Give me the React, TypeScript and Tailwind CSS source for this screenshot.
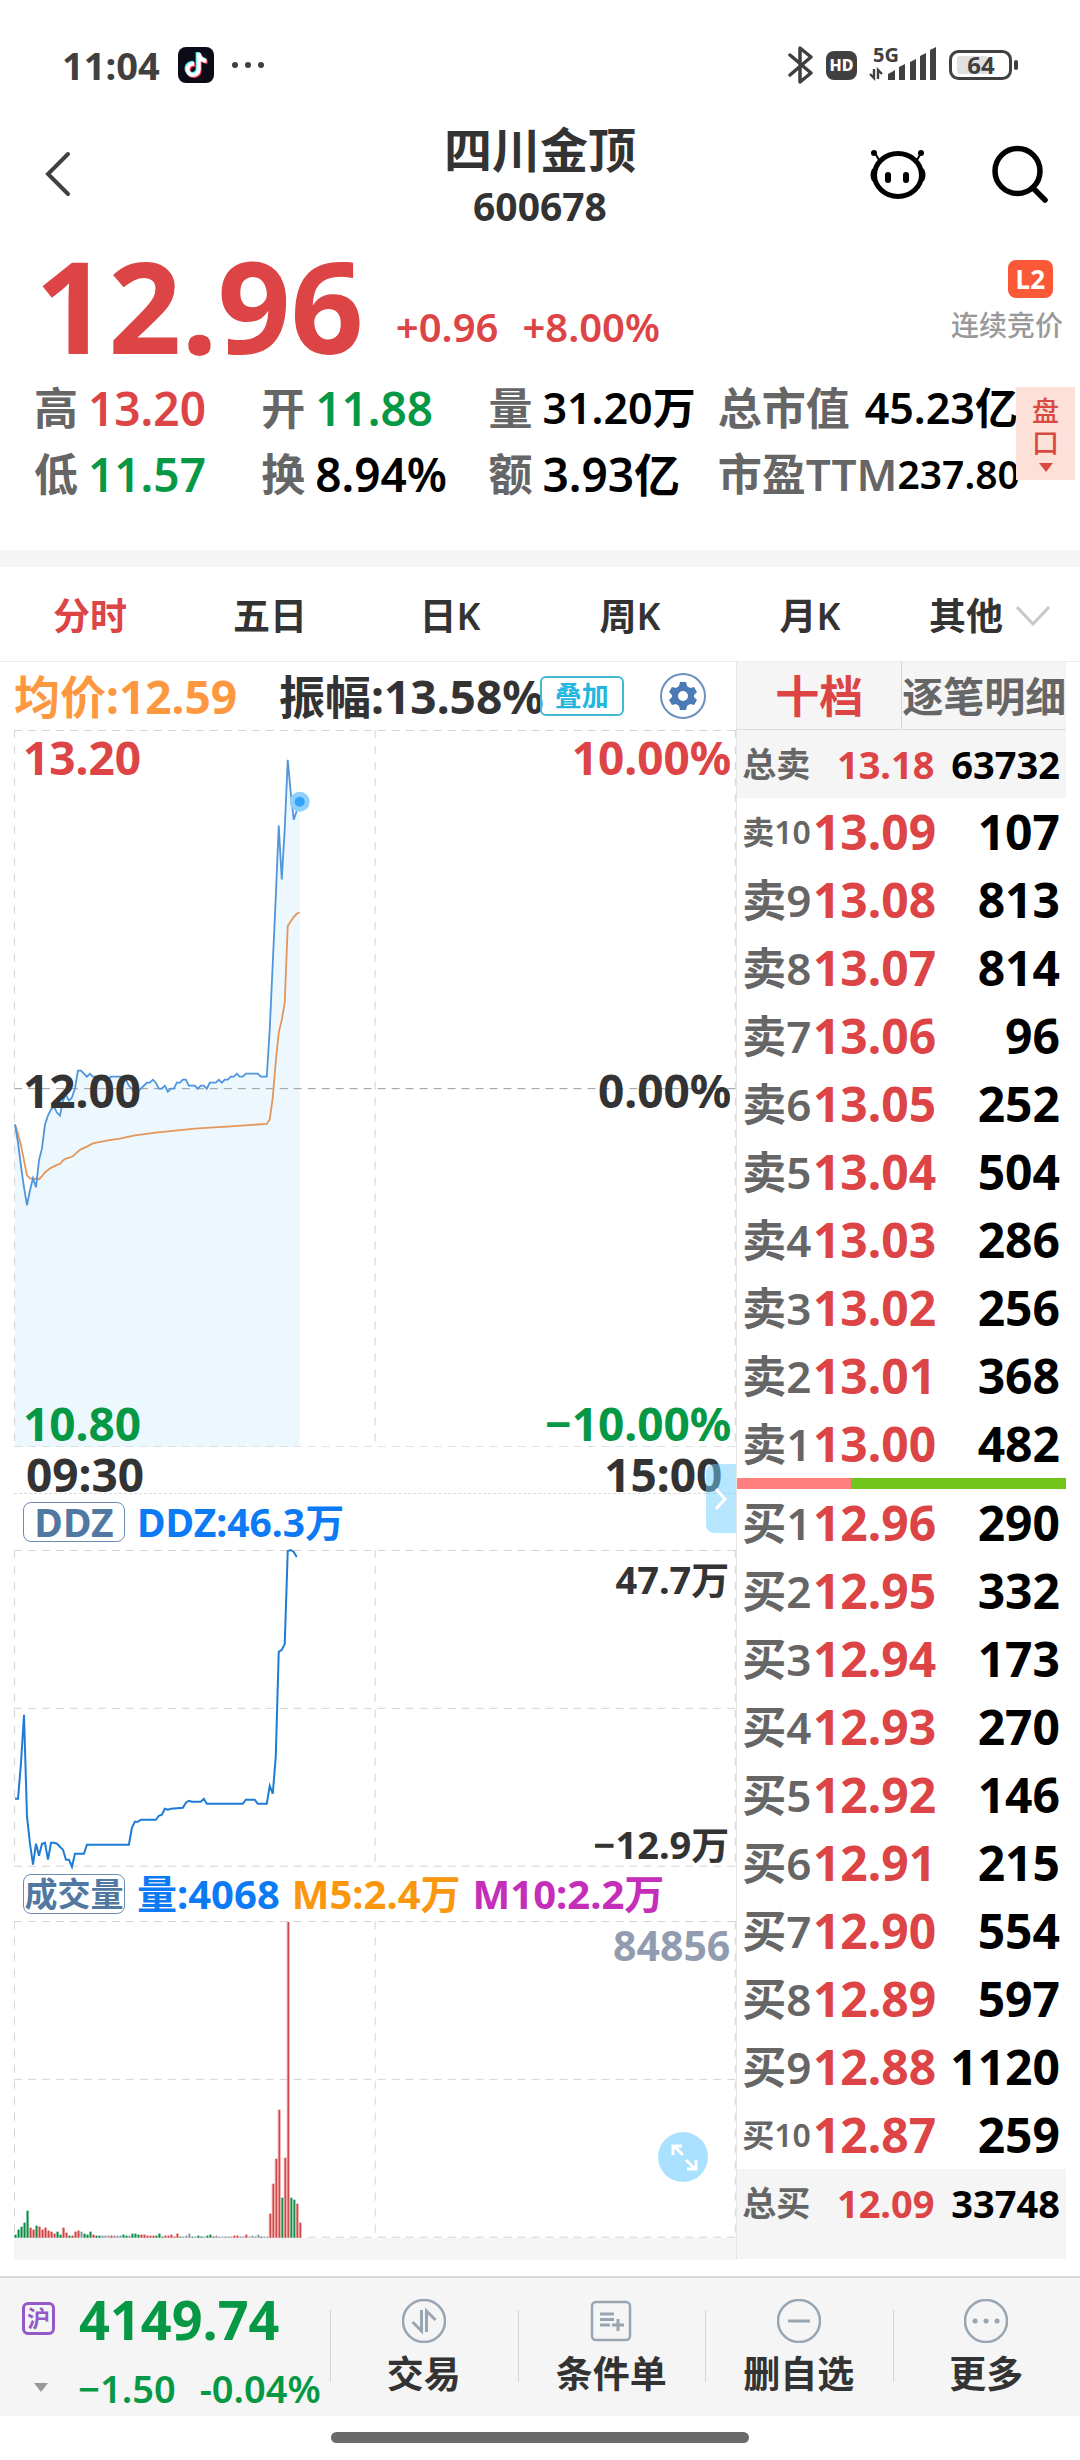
import React, { useState } from 'react';
import { FaTiktok } from 'react-icons/fa';
import clsx from 'clsx';

type Tone = 'up' | 'down' | 'flat';

interface Stat {
  label: string;
  value: string;
  tone: Tone;
  small?: boolean;
}

interface Order {
  label: string;
  price: string;
  volume: string;
}

const toneClass: Record<Tone, string> = {
  up: 'text-[#dc4446]',
  down: 'text-[#069845]',
  flat: 'text-black',
};

const stats: Stat[] = [
  { label: '高', value: '13.20', tone: 'up' },
  { label: '开', value: '11.88', tone: 'down' },
  { label: '量', value: '31.20万', tone: 'flat', small: true },
  { label: '总市值', value: '45.23亿', tone: 'flat', small: true },
  { label: '低', value: '11.57', tone: 'down' },
  { label: '换', value: '8.94%', tone: 'flat' },
  { label: '额', value: '3.93亿', tone: 'flat' },
];

const periods = ['分时', '五日', '日K', '周K', '月K'];

const asks: Order[] = [
  { label: '卖10', price: '13.09', volume: '107' },
  { label: '卖9', price: '13.08', volume: '813' },
  { label: '卖8', price: '13.07', volume: '814' },
  { label: '卖7', price: '13.06', volume: '96' },
  { label: '卖6', price: '13.05', volume: '252' },
  { label: '卖5', price: '13.04', volume: '504' },
  { label: '卖4', price: '13.03', volume: '286' },
  { label: '卖3', price: '13.02', volume: '256' },
  { label: '卖2', price: '13.01', volume: '368' },
  { label: '卖1', price: '13.00', volume: '482' },
];

const bids: Order[] = [
  { label: '买1', price: '12.96', volume: '290' },
  { label: '买2', price: '12.95', volume: '332' },
  { label: '买3', price: '12.94', volume: '173' },
  { label: '买4', price: '12.93', volume: '270' },
  { label: '买5', price: '12.92', volume: '146' },
  { label: '买6', price: '12.91', volume: '215' },
  { label: '买7', price: '12.90', volume: '554' },
  { label: '买8', price: '12.89', volume: '597' },
  { label: '买9', price: '12.88', volume: '1120' },
  { label: '买10', price: '12.87', volume: '259' },
];

// Minute prices since 09:30, in cents away from the 12.00 previous close
const priceCents = [
  -12, -18, -26, -33, -39, -34, -30, -33, -24, -20, -12, -9, -7, -6, -8, -9, -4, -2, -4, -3,
  0, 6, 6, 5, 4, 5, 4, 4, 4, 3, 3, 3, 4, 4, 4, 4, 4, 3, 1, 0,
  -2, -1, 0, 1, 2, 2, 3, 2, 0, 0, 1, -1, 0, 0, 2, 2, 3, 3, 1, 1,
  1, 0, 1, 1, 0, 2, 2, 2, 3, 2, 3, 3, 4, 4, 5, 4, 4, 5, 5, 5,
  5, 5, 4, 4, 4, 20, 42, 64, 88, 70, 87, 110, 99, 90, 93, 96,
];

// [minute, cents]
const averageCents: number[][] = [
  [0, -12], [1, -15], [2, -19], [3, -24], [4, -29], [5, -30], [8, -30.3], [9, -29.3], [10, -28],
  [11, -27.2], [12, -26.5], [13, -26], [14, -25.5], [15, -25.2], [16, -24], [17, -23.4], [19, -22.8],
  [20, -22], [21, -21], [22, -20.3], [23, -19.8], [24, -19.4], [26, -18.3], [31, -17.3], [35, -16.7],
  [40, -15.6], [47, -14.7], [60, -13.4], [72, -12.6], [84, -11.8], [85, -10.2], [86, -3], [87, 9],
  [88, 18.7], [89, 23], [90, 28.8], [91, 54.4], [92, 56], [93, 57.4], [94, 58.5], [95, 59],
];

// [minute, distance from the top of the 317 high plot]
const ddzPoints: number[][] = [
  [0, 249], [1, 249], [2, 213], [3, 165], [4, 267], [5, 294], [6, 315], [7, 294], [8, 306], [9, 294],
  [10, 293], [11, 310], [12, 293], [13, 293], [14, 294], [15, 297], [16, 300], [17, 310], [18, 310],
  [19, 317], [20, 304], [23, 304], [24, 295], [38, 295], [39, 278], [40, 272], [41, 272], [42, 270],
  [47, 270], [48, 266], [49, 265], [50, 259], [51, 260], [52, 259], [56, 258], [57, 253], [58, 251],
  [59, 252], [62, 252], [63, 249], [64, 254], [76, 254], [77, 250], [80, 250], [81, 254], [84, 254],
  [85, 236], [86, 244], [87, 207], [88, 102], [89, 100], [90, 94], [91, 1], [92, 0], [93, 2], [94, 7],
];

const volumes = [
  3, 8, 11, 15, 27, 10, 8, 12, 11, 8, 10, 7, 6, 4, 6, 3, 10, 5, 2, 2,
  6, 7, 6, 4, 3, 6, 3, 2, 2, 2, 2, 2, 2, 2, 2, 2, 3, 2, 2, 4,
  4, 3, 3, 3, 2, 2, 2, 2, 4, 1, 2, 2, 3, 1, 4, 1, 1, 2, 4, 1,
  1, 2, 1, 1, 2, 3, 1, 2, 1, 1, 1, 1, 1, 2, 2, 1, 1, 3, 1, 2,
  1, 3, 1, 1, 1, 24, 54, 79, 128, 40, 80, 316, 40, 38, 34, 15,
];

const barSides =
  'gggggrrgrrrrrrggrrgr' +
  'rrngggrggnnnrnnnggng' +
  'ggrrrrrgggrrrrrgnnng' +
  'nggnggrnnnnnnrrnnrnn' +
  'nngnnrrrrgrrggrr';

const barColors: Record<string, { line: string; body: string }> = {
  r: { line: '#c9474a', body: '#f19c9b' },
  g: { line: '#16894a', body: '#7cc9a0' },
  n: { line: '#8896a0', body: '#c4cbd0' },
};

const PLOT_WIDTH = 723;
const PRICE_HEIGHT = 718;
const STUDY_HEIGHT = 317;

const minuteX = (minute: number) => 1 + minute * 3;
const centsY = (cents: number) => PRICE_HEIGHT / 2 - (cents * PRICE_HEIGHT) / 240;

const toPoints = (points: number[][]) => points.map(([x, y]) => `${x},${y}`).join(' ');

const Grid: React.FC<{ height: number; midColor?: string }> = ({ height, midColor = '#d4d4d4' }) => (
  <g fill="none" stroke="#d4d4d4" strokeWidth="1">
    <path d={`M0 .5H${PLOT_WIDTH}M0 ${height - 0.5}H${PLOT_WIDTH}`} strokeDasharray="8 6" />
    <path d={`M0 ${height / 2}H${PLOT_WIDTH}`} stroke={midColor} strokeDasharray="8 6" />
    <path d={`M.5 0V${height}M361.5 0V${height}M722 0V${height}`} strokeDasharray="8 8" />
  </g>
);

const PriceChart: React.FC = () => {
  const price = priceCents.map((cents, i) => [minuteX(i), centsY(cents)]);
  const average = averageCents.map(([m, cents]) => [minuteX(m), centsY(cents)]);
  const [lastX, lastY] = price[price.length - 1];

  return (
    <svg viewBox="0 0 723 718" className="block w-full" aria-label="分时走势">
      <polygon points={`${toPoints(price)} ${lastX},718 1,718`} fill="#ecf8fe" />
      <Grid height={PRICE_HEIGHT} midColor="#999999" />
      <polyline points={toPoints(average)} fill="none" stroke="#e2965a" strokeWidth="1.8" />
      <polyline points={toPoints(price)} fill="none" stroke="#4f95dc" strokeWidth="1.8" />
      <circle cx={lastX} cy={lastY} r="10" fill="#8fd0fb" />
      <circle cx={lastX} cy={lastY} r="5" fill="#36a3fb" />
    </svg>
  );
};

const DdzChart: React.FC = () => (
  <svg viewBox="0 0 723 317" className="block w-full overflow-visible" aria-label="DDZ">
    <Grid height={STUDY_HEIGHT} />
    <polyline
      points={toPoints(ddzPoints.map(([m, y]) => [minuteX(m), y]))}
      fill="none"
      stroke="#1f7cd6"
      strokeWidth="2"
    />
  </svg>
);

const VolumeChart: React.FC = () => (
  <svg viewBox="0 0 723 317" className="block w-full" aria-label="成交量">
    <Grid height={STUDY_HEIGHT} />
    {volumes.map((volume, i) => {
      const color = barColors[barSides[i] ?? 'n'];
      return (
        <g key={i}>
          <rect x={minuteX(i) - 1} y={STUDY_HEIGHT - volume} width="3" height={volume} fill={color.body} />
          <rect x={minuteX(i)} y={STUDY_HEIGHT - volume} width="1.2" height={volume} fill={color.line} />
        </g>
      );
    })}
  </svg>
);

const StatusBar: React.FC = () => (
  <div className="flex items-center justify-between h-[122px] pt-2 pl-[62px] pr-[61px] text-[#404040]">
    <div className="flex items-center gap-[18px]">
      <span className="text-[38px] leading-[48px] font-bold">11:04</span>
      <span className="flex items-center justify-center w-9 h-9 rounded-lg bg-[#0b0c18]">
        <FaTiktok className="w-6 h-6 text-white [filter:drop-shadow(-1px_-1px_0_#25f4ee)_drop-shadow(1px_1px_0_#fe2c55)]" />
      </span>
      <span className="flex gap-[7px]">
        <i className="w-[6px] h-[6px] rounded-full bg-[#404040]" />
        <i className="w-[6px] h-[6px] rounded-full bg-[#404040]" />
        <i className="w-[6px] h-[6px] rounded-full bg-[#404040]" />
      </span>
    </div>
    <div className="flex items-center">
      <svg viewBox="0 0 26 40" className="w-[26px] h-10" fill="none" stroke="currentColor" strokeWidth="3.500" strokeLinejoin="round">
        <path d="M2 10l21 18-11 9V3l11 9L2 30" strokeLinecap="round" />
      </svg>
      <span className="flex items-center justify-center w-[31px] h-[29px] ml-3 rounded-lg bg-[#404040] text-white text-[16px] leading-none font-extrabold">
        HD
      </span>
      <div className="relative ml-3 w-[68px] h-9">
        <span className="absolute left-1 -top-1 text-[20px] leading-[24px] font-bold">5G</span>
        <svg viewBox="0 0 68 36" className="block w-full h-full" fill="currentColor">
          <path d="M19 33v-6q4-2 7-4v10zM30 33V20l6-3v16zM41 33V15l6-3v21zM51 33V9l6-3v27zM61 33V3l6-3v33z" />
          <path d="M5 22v9l-4-4M9 32v-9l4 4" fill="none" stroke="currentColor" strokeWidth="2.4" />
        </svg>
      </div>
      <svg viewBox="0 0 70 30" className="ml-3 w-[70px] h-[30px]">
        <rect x="8" y="6" width="31" height="18" rx="3" fill="#e0e0e0" />
        <rect x="1.5" y="1.5" width="60" height="27" rx="8" fill="none" stroke="#404040" strokeWidth="3" />
        <rect x="65" y="10" width="4" height="10" rx="2" fill="#404040" />
        <text x="32" y="24" textAnchor="middle" fontSize="24" fontWeight="700" fill="#404040">
          64
        </text>
      </svg>
    </div>
  </div>
);

const Header: React.FC = () => (
  <header className="relative h-28 flex items-start justify-between pl-8 pr-8">
    <button type="button" aria-label="返回" className="pt-[27px]">
      <svg viewBox="0 0 50 50" className="w-[50px] h-[50px]">
        <path d="M36 5 16 25l20 20" fill="none" stroke="#404040" strokeWidth="4" strokeLinecap="round" />
      </svg>
    </button>
    <div className="absolute inset-x-0 text-center text-[#333333] pointer-events-none">
      <h1 className="text-[48px] leading-[56px] font-bold">四川金顶</h1>
      <p className="text-[39px] leading-[56px] font-bold">600678</p>
    </div>
    <div className="relative flex items-center pt-[23px] gap-[66px]">
      <button type="button" aria-label="智能助手">
        <svg viewBox="0 0 56 50" className="w-14 h-[50px]">
          <ellipse cx="28" cy="26" rx="23.500" ry="21.500" fill="none" stroke="#000" strokeWidth="5" />
          <path d="M2 20Q-1 26 2 32L6 34V18zM54 20q3 6 0 12l-4 2V18z" />
          <path d="M5 4l4 7M51 4l-4 7" stroke="#000" strokeWidth="2" />
          <circle cx="4" cy="4" r="3" />
          <circle cx="51" cy="4" r="3" />
          <rect x="15" y="23" width="6" height="11" rx="3" />
          <rect x="33" y="23" width="6" height="11" rx="3" />
        </svg>
      </button>
      <button type="button" aria-label="搜索">
        <svg viewBox="0 0 56 58" className="w-14 h-[58px]" fill="none" stroke="#000" strokeWidth="5.500">
          <circle cx="25.500" cy="26" r="22.500" />
          <path d="m41 43 12 12" strokeLinecap="round" />
        </svg>
      </button>
    </div>
  </header>
);

const Quote: React.FC = () => (
  <section className="relative pt-[17px] pb-[43px]">
    <div className="flex justify-between h-[124px] pl-[35px] pr-[17px]">
      <div className="flex items-end text-[#dc4446]">
        <span className="text-[128px] leading-[108px] pb-4 font-bold">12.96</span>
        <span className="flex gap-6 pl-8 text-[40px] leading-[56px] font-semibold pb-5">
          <span>+0.96</span>
          <span>+8.00%</span>
        </span>
      </div>
      <div className="flex flex-col items-end pt-[9px]">
        <span className="mr-[10px] px-2 rounded-lg bg-[#fb5838] text-white text-[26px] leading-[38px] font-bold">L2</span>
        <span className="mt-2 text-[28px] leading-[38px] font-medium text-[#999999]">连续竞价</span>
      </div>
    </div>

    <dl className="grid grid-cols-[227fr_227fr_229fr_362fr] pl-[34px] leading-[66px] text-[46px] whitespace-nowrap">
      {stats.map((stat) => (
        <div key={stat.label} className="flex items-center">
          <dt className="text-[44px] font-semibold text-[#666666]">{stat.label}</dt>
          <dd
            className={clsx(
              'font-semibold',
              toneClass[stat.tone],
              stat.small && 'text-[43px]',
              stat.label.length > 1 ? 'pl-[15px]' : 'pl-[10px]'
            )}
          >
            {stat.value}
          </dd>
        </div>
      ))}
      <div className="flex items-center">
        <dt className="text-[44px] font-semibold text-[#666666]">市盈TTM</dt>
        <dd className="text-[39px] font-semibold text-black">237.80</dd>
      </div>
    </dl>

    <button
      type="button"
      className="absolute right-[5px] bottom-[70px] w-[59px] h-[93px] flex flex-col items-center justify-center bg-[#fde1d9] text-[#d84a40] text-[27px] leading-[32px] font-medium"
    >
      <span>盘</span>
      <span>口</span>
      <svg viewBox="0 0 14 9" className="mt-1 w-[14px] h-[9px]" fill="currentColor">
        <path d="M0 0h14L7 9z" />
      </svg>
    </button>
  </section>
);

const Chip: React.FC<{ children: React.ReactNode; className?: string }> = ({ children, className }) => (
  <button
    type="button"
    className={clsx(
      'w-[102px] h-10 mr-3 rounded-lg border border-[#6c8cb0] text-[#5078a0] leading-[36px] font-bold',
      className
    )}
  >
    {children}
  </button>
);

const ChartPanel: React.FC = () => (
  <div className="relative flex-[723] min-w-0 text-[#333333] font-bold whitespace-nowrap">
    <div className="flex items-center h-[68px] text-[46px]">
      <span className="text-[#fd9840]">均价:12.59</span>
      <span className="pl-[42px]">振幅:13.58%</span>
      <button
        type="button"
        className="shrink-0 -ml-1 w-[84px] h-10 rounded-md border-2 border-[#45b9d0] text-[#22b6e0] text-[27px] leading-[34px]"
      >
        叠加
      </button>
      <button
        type="button"
        aria-label="设置"
        className="shrink-0 ml-9 flex items-center justify-center w-[46px] h-[46px] rounded-full border-2 border-[#6c8fbe]"
      >
        <svg viewBox="0 0 28 28" className="w-7 h-7">
          <path
            fill="#4c7ab4"
            fillRule="evenodd"
            d="M11 0h6l1 4 3 2 4-1 3 5-3 3v2l3 3-3 5-4-1-3 2-1 4h-6l-1-4-3-2-4 1-3-5 3-3v-2l-3-3 3-5 4 1 3-2zM14 9a5 5 0 1 0 0 10 5 5 0 0 0 0-10z"
          />
        </svg>
      </button>
    </div>

    <div className="relative text-[46px] leading-[48px]">
      <PriceChart />
      <div className="absolute inset-0 flex flex-col justify-between pt-[3px] pl-[9px] pr-[5px]">
        <div className="flex justify-between text-[#dc4446]">
          <span>13.20</span>
          <span>10.00%</span>
        </div>
        <div className="flex justify-between">
          <span>12.00</span>
          <span>0.00%</span>
        </div>
        <div className="flex justify-between text-[#069845]">
          <span>10.80</span>
          <span>−10.00%</span>
        </div>
      </div>
    </div>

    <div className="flex items-center justify-between h-[47px] pt-2 pl-3 pr-[14px] text-[46px] leading-[38px] border-b border-dashed border-[#dcdcdc]">
      <span>09:30</span>
      <span>15:00</span>
    </div>

    <div className="flex items-center h-14 pl-[9px]">
      <Chip className="text-[39px]">DDZ</Chip>
      <span className="text-[39px] text-[#0d7af5]">DDZ:46.3万</span>
    </div>
    <div className="relative">
      <DdzChart />
      <div className="absolute inset-0 flex flex-col items-end justify-between pt-[6px] pr-[7px] text-[38px] leading-[46px]">
        <span>47.7万</span>
        <span>−12.9万</span>
      </div>
    </div>

    <div className="flex items-center h-[54px] pl-[9px] text-[40px]">
      <Chip className="text-[33px]">成交量</Chip>
      <span className="text-[#0d7af5]">量:4068</span>
      <span className="pl-3 text-[#fa970f]">M5:2.4万</span>
      <span className="pl-3 text-[#c42eb8]">M10:2.2万</span>
    </div>
    <div className="relative">
      <VolumeChart />
      <span className="absolute top-0 right-[6px] text-[41px] leading-[48px] text-[#929cb0]">84856</span>
      <button
        type="button"
        aria-label="全屏"
        className="absolute right-7 bottom-14 w-[50px] h-[50px] rounded-full bg-[#a9e1ff]"
      >
        <svg viewBox="0 0 50 50" className="w-full h-full" fill="none" stroke="#fff" strokeWidth="3">
          <path d="m25 23-9-9M15 23v-9h9M28 28l9 9M38 28v9h-9" />
        </svg>
      </button>
    </div>
    <div className="h-[22px] bg-[#f5f5f5]" />

    <button
      type="button"
      aria-label="收起盘口"
      className="absolute right-0 top-[802px] w-[30px] h-[69px] flex items-center justify-center rounded-l-lg bg-[#6fcdff]/50"
    >
      <svg viewBox="0 0 12 22" className="w-3 h-[22px]" fill="none" stroke="#fff" strokeWidth="3">
        <path d="m1 1 9 10-9 10" />
      </svg>
    </button>
  </div>
);

const OrderTable: React.FC<{ orders: Order[]; caption: string }> = ({ orders, caption }) => (
  <table className="w-full table-fixed whitespace-nowrap" aria-label={caption}>
    <tbody>
      {orders.map((order) => {
        const isTotal = order.label.startsWith('总');
        return (
          <tr key={order.label} className={clsx('h-[68px]', isTotal && 'bg-[#f5f5f5]')}>
            <th
              scope="row"
              className={clsx(
                'w-[23%] p-0 pl-[5px] text-left text-[#666666] font-semibold',
                isTotal ? 'text-[34px]' : order.label.length > 2 ? 'text-[32px]' : 'text-[44px]'
              )}
            >
              {order.label}
            </th>
            <td
              className={clsx(
                'w-[37%] p-0 text-right font-bold text-[#dc4446]',
                isTotal ? 'text-[38px]' : 'text-[48px]'
              )}
            >
              {order.price}
            </td>
            <td
              className={clsx('p-0 pr-[6px] text-right font-bold text-black', isTotal ? 'text-[38px]' : 'text-[48px]')}
            >
              {order.volume}
            </td>
          </tr>
        );
      })}
    </tbody>
  </table>
);

const OrderBook: React.FC = () => (
  <div className="flex-[329] min-w-0 border-l border-[#e5e5e5] leading-[60px]">
    <div className="flex h-[68px] bg-[#f5f5f5] border-b border-[#dddddd] whitespace-nowrap">
      <button type="button" className="flex-1 text-[44px] font-bold text-[#dc4446]">
        十档
      </button>
      <button type="button" className="flex-1 min-w-0 border-l border-[#d4d4d4] text-[41px] font-semibold text-[#666666]">
        逐笔明细
      </button>
    </div>
    <OrderTable caption="卖盘" orders={[{ label: '总卖', price: '13.18', volume: '63732' }, ...asks]} />
    <div className="flex h-[11px]">
      <div className="bg-[#ff7f7f]" style={{ width: `${(33748 / (33748 + 63732)) * 100}%` }} />
      <div className="flex-1 bg-[#70c41a]" />
    </div>
    <OrderTable caption="买盘" orders={[...bids, { label: '总买', price: '12.09', volume: '33748' }]} />
    <div className="h-[22px] bg-[#f5f5f5]" />
  </div>
);

const actions = [
  {
    label: '交易',
    icon: (
      <>
        <circle cx="22" cy="22" r="21" />
        <path d="M19.500 11v21l-9-9M24.500 33V12l9 9" strokeWidth="3" />
      </>
    ),
  },
  {
    label: '条件单',
    icon: (
      <>
        <rect x="3" y="3" width="38" height="38" rx="4" />
        <path d="M11 15h14M11 20.500h14M11 26h10M29 20v12M23 26h12" strokeWidth="3" />
      </>
    ),
  },
  {
    label: '删自选',
    icon: (
      <>
        <circle cx="22" cy="22" r="21" />
        <path d="M11 22h22" strokeWidth="3" />
      </>
    ),
  },
  {
    label: '更多',
    icon: (
      <>
        <circle cx="22" cy="22" r="21" />
        <path d="M11 22h.1M22 22h.1M33 22h.1" strokeWidth="5" strokeLinecap="round" />
      </>
    ),
  },
];

const BottomBar: React.FC = () => (
  <footer className="flex h-[140px] items-center border-t-2 border-[#d8d8d8] bg-[#f5f5f5]">
    <div className="w-[330px] shrink-0 pt-3 pl-[22px] font-bold text-[#069845] whitespace-nowrap">
      <div className="flex items-center">
        <span className="flex items-center justify-center w-[33px] h-[33px] rounded-md border-[3px] border-[#9459c6] text-[#9459c6] text-[23px] leading-none">
          沪
        </span>
        <span className="pl-6 text-[54px] leading-[70px]">4149.74</span>
      </div>
      <div className="flex items-center text-[38px] leading-[68px] font-semibold">
        <svg viewBox="0 0 14 9" className="ml-3 w-[14px] h-[9px]" fill="#999999">
          <path d="M0 0h14L7 9z" />
        </svg>
        <span className="pl-[30px]">−1.50</span>
        <span className="pl-6">-0.04%</span>
      </div>
    </div>
    {actions.map((action) => (
      <button
        key={action.label}
        type="button"
        className="relative flex-1 flex flex-col items-center pt-[3px] text-[37px] leading-[46px] font-bold text-[#333333]"
      >
        <i className="absolute left-0 top-[14px] w-px h-[72px] bg-[#d4d4d4]" />
        <svg viewBox="0 0 44 44" className="mb-2 w-11 h-11" fill="none" stroke="#98a6b4" strokeWidth="2.500">
          {action.icon}
        </svg>
        {action.label}
      </button>
    ))}
  </footer>
);

const App: React.FC = () => {
  const [period, setPeriod] = useState('分时');

  return (
    <div className="min-h-screen bg-white font-['Noto_Sans','Noto_Sans_CJK_SC',sans-serif] overflow-hidden">
      <StatusBar />
      <Header />
      <Quote />
      <div className="h-[17px] bg-[#f5f5f5]" />

      {/* Period tabs */}
      <nav className="grid grid-cols-6 h-[95px] pt-1 border-b border-[#ececec] text-[37px] font-semibold">
        {periods.map((item) => (
          <button
            key={item}
            type="button"
            onClick={() => setPeriod(item)}
            className={item === period ? 'text-[#dc4446]' : 'text-[#333333]'}
          >
            {item}
          </button>
        ))}
        <button type="button" className="flex items-center justify-center gap-3 text-[#333333]">
          其他
          <svg viewBox="0 0 36 22" className="w-9 h-[22px]" fill="none" stroke="#c8c8cc" strokeWidth="3">
            <path d="m2 2 16 17L34 2" />
          </svg>
        </button>
      </nav>

      {/* Chart and order book */}
      <main className="flex px-[14px]">
        <ChartPanel />
        <OrderBook />
      </main>

      <div className="h-4" />
      <BottomBar />
      <div className="flex justify-center pt-4">
        <div className="w-[418px] h-[11px] rounded-full bg-[#6a6a6a]" />
      </div>
    </div>
  );
};

export default App;
